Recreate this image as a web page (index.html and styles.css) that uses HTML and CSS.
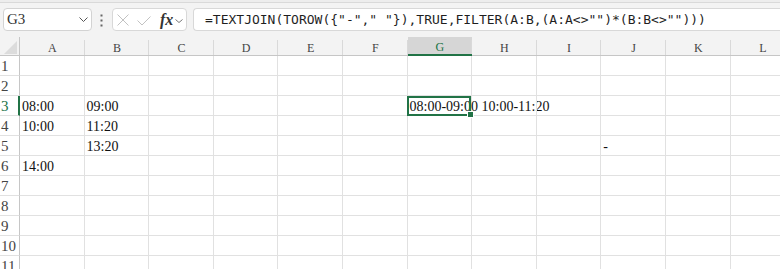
FILE: index.html
```html
<!DOCTYPE html>
<html>
<head>
<meta charset="utf-8">
<link rel="stylesheet" href="styles.css">
</head>
<body>
<div class="toolbar">
  <div class="namebox">
    <span class="ref">G3</span>
    <svg class="chev" width="9" height="5" viewBox="0 0 9 5"><polyline points="0.5,0.5 4.5,4.5 8.5,0.5" fill="none" stroke="#555" stroke-width="1"/></svg>
  </div>
  <svg class="dots" width="3" height="13" viewBox="0 0 3 13"><rect x="0.5" y="0.5" width="2" height="2" fill="#666"/><rect x="0.5" y="5.5" width="2" height="2" fill="#666"/><rect x="0.5" y="10.5" width="2" height="2" fill="#666"/></svg>
  <div class="fxbox">
    <svg class="xicon" width="12" height="12" viewBox="0 0 12 12"><path d="M0.5 0.5 L11.5 11.5 M11.5 0.5 L0.5 11.5" stroke="#c2c2c2" stroke-width="1" fill="none"/></svg>
    <svg class="check" width="14" height="10" viewBox="0 0 14 10"><polyline points="0.5,4.5 5,9 13.5,0.5" fill="none" stroke="#c2c2c2" stroke-width="1"/></svg>
    <span class="fx">fx</span>
    <svg class="chev2" width="8" height="4" viewBox="0 0 8 4"><polyline points="0.5,0.5 4,3.5 7.5,0.5" fill="none" stroke="#777" stroke-width="1"/></svg>
  </div>
  <div class="formula">=TEXTJOIN(TOROW({"-"," "}),TRUE,FILTER(A:B,(A:A&lt;&gt;"")*(B:B&lt;&gt;"")))</div>
</div>
<div class="sheet">
  <div class="corner"><svg width="13" height="13" viewBox="0 0 13 13"><polygon points="13,0 13,13 0,13" fill="#dcdcdc"/></svg></div>
  <div class="ch">A</div><div class="ch">B</div><div class="ch">C</div><div class="ch">D</div><div class="ch">E</div><div class="ch">F</div><div class="ch chsel">G</div><div class="ch">H</div><div class="ch">I</div><div class="ch">J</div><div class="ch">K</div><div class="ch">L</div>

  <div class="rh">1</div><div class="c"></div><div class="c"></div><div class="c"></div><div class="c"></div><div class="c"></div><div class="c"></div><div class="c"></div><div class="c"></div><div class="c"></div><div class="c"></div><div class="c"></div><div class="c"></div>
  <div class="rh">2</div><div class="c"></div><div class="c"></div><div class="c"></div><div class="c"></div><div class="c"></div><div class="c"></div><div class="c"></div><div class="c"></div><div class="c"></div><div class="c"></div><div class="c"></div><div class="c"></div>
  <div class="rh rhsel">3</div><div class="c">08:00</div><div class="c">09:00</div><div class="c"></div><div class="c"></div><div class="c"></div><div class="c"></div><div class="c sel">08:00-09:00 10:00-11:20</div><div class="c"></div><div class="c"></div><div class="c"></div><div class="c"></div><div class="c"></div>
  <div class="rh">4</div><div class="c">10:00</div><div class="c">11:20</div><div class="c"></div><div class="c"></div><div class="c"></div><div class="c"></div><div class="c"></div><div class="c"></div><div class="c"></div><div class="c"></div><div class="c"></div><div class="c"></div>
  <div class="rh">5</div><div class="c"></div><div class="c">13:20</div><div class="c"></div><div class="c"></div><div class="c"></div><div class="c"></div><div class="c"></div><div class="c"></div><div class="c"></div><div class="c">-</div><div class="c"></div><div class="c"></div>
  <div class="rh">6</div><div class="c">14:00</div><div class="c"></div><div class="c"></div><div class="c"></div><div class="c"></div><div class="c"></div><div class="c"></div><div class="c"></div><div class="c"></div><div class="c"></div><div class="c"></div><div class="c"></div>
  <div class="rh">7</div><div class="c"></div><div class="c"></div><div class="c"></div><div class="c"></div><div class="c"></div><div class="c"></div><div class="c"></div><div class="c"></div><div class="c"></div><div class="c"></div><div class="c"></div><div class="c"></div>
  <div class="rh">8</div><div class="c"></div><div class="c"></div><div class="c"></div><div class="c"></div><div class="c"></div><div class="c"></div><div class="c"></div><div class="c"></div><div class="c"></div><div class="c"></div><div class="c"></div><div class="c"></div>
  <div class="rh">9</div><div class="c"></div><div class="c"></div><div class="c"></div><div class="c"></div><div class="c"></div><div class="c"></div><div class="c"></div><div class="c"></div><div class="c"></div><div class="c"></div><div class="c"></div><div class="c"></div>
  <div class="rh">10</div><div class="c"></div><div class="c"></div><div class="c"></div><div class="c"></div><div class="c"></div><div class="c"></div><div class="c"></div><div class="c"></div><div class="c"></div><div class="c"></div><div class="c"></div><div class="c"></div>
  <div class="rh">11</div><div class="c"></div><div class="c"></div><div class="c"></div><div class="c"></div><div class="c"></div><div class="c"></div><div class="c"></div><div class="c"></div><div class="c"></div><div class="c"></div><div class="c"></div><div class="c"></div>
</div>
</body>
</html>
```

FILE: styles.css
```css
html, body {
  margin: 0;
  padding: 0;
}
body {
  width: 780px;
  height: 269px;
  overflow: hidden;
  background: #ffffff;
  font-family: "Liberation Serif", "Times New Roman", serif;
  color: #1f1f1f;
}

.toolbar {
  height: 37px;
  box-sizing: border-box;
  display: flex;
  align-items: flex-start;
  padding: 8px 0 0 3px;
  background: linear-gradient(#ededed 0 2px, #d9d9d9 2px 3px, #f3f3f3 3px);
  white-space: nowrap;
}

.namebox {
  width: 89px;
  height: 23px;
  box-sizing: border-box;
  border: 1px solid #d3d3d3;
  border-radius: 4px;
  background: #fff;
  display: flex;
  align-items: center;
  justify-content: space-between;
  padding: 0 3px 0 3px;
  flex: none;
}
.ref {
  font-size: 15px;
  color: #333;
  line-height: 21px;
}
.chev {
  display: block;
}

.dots {
  display: block;
  margin: 6px 0 0 8px;
  flex: none;
}

.fxbox {
  margin-left: 9px;
  width: 75px;
  height: 23px;
  box-sizing: border-box;
  border: 1px solid #d8d8d8;
  border-radius: 4px;
  background: #fff;
  display: flex;
  align-items: center;
  padding-left: 4px;
  flex: none;
}
.xicon { display: block; }
.check { display: block; margin-left: 8px; margin-top: 2px; }
.fx {
  margin-left: 9px;
  font-style: italic;
  font-weight: bold;
  font-size: 16px;
  color: #333;
  line-height: 21px;
}
.chev2 { display: block; margin-left: 2px; margin-top: 2px; }

.formula {
  margin-left: 6px;
  flex: 1;
  height: 23px;
  box-sizing: border-box;
  border: 1px solid #d8d8d8;
  border-right: none;
  border-radius: 4px 0 0 4px;
  background: #fff;
  padding-left: 11px;
  font-family: "DejaVu Sans Mono", "Liberation Mono", monospace;
  font-size: 13px;
  line-height: 21px;
  color: #1f1f1f;
  overflow: hidden;
}

.sheet {
  display: grid;
  grid-template-columns: 20px repeat(12, 64.6px);
  grid-template-rows: 19px;
  grid-auto-rows: 20px;
}

.corner {
  background: #f3f3f3;
  border-right: 1px solid #c6c6c6;
  border-bottom: 1px solid #c6c6c6;
  box-sizing: border-box;
  display: flex;
  align-items: flex-end;
  justify-content: flex-end;
  padding: 0 2px 1px 0;
}
.corner svg { display: block; }

.ch {
  background: #f3f3f3;
  border-bottom: 1px solid #c6c6c6;
  box-sizing: border-box;
  position: relative;
  text-align: center;
  font-size: 12px;
  color: #444;
  line-height: 22px;
  overflow: hidden;
}
.ch::after {
  content: "";
  position: absolute;
  right: 0;
  top: 3px;
  bottom: 0;
  width: 1px;
  background: #d9d9d9;
}
.chsel {
  background: #d6d6d6;
  color: #217346;
  border-bottom: 2px solid #217346;
  line-height: 21px;
}

.rh {
  background: #fff;
  border-right: 1px solid #c6c6c6;
  border-bottom: 1px solid #e1e1e1;
  box-sizing: border-box;
  font-size: 15px;
  color: #444;
  padding-left: 1px;
  line-height: 21px;
  overflow: hidden;
}
.rhsel {
  color: #217346;
  border-right: 2px solid #217346;
}

.c {
  border-right: 1px solid #e1e1e1;
  border-bottom: 1px solid #e1e1e1;
  box-sizing: border-box;
  font-size: 14px;
  line-height: 18px;
  padding: 2px 0 0 2px;
  white-space: nowrap;
  color: #111;
  position: relative;
}

.sel::after {
  content: "";
  position: absolute;
  left: -1px;
  top: 0;
  right: 0;
  bottom: -1px;
  border: 2px solid #217346;
}
.sel::before {
  content: "";
  position: absolute;
  right: -3px;
  bottom: -3px;
  width: 5px;
  height: 5px;
  background: #217346;
  border: 1px solid #fff;
  z-index: 2;
}
```
